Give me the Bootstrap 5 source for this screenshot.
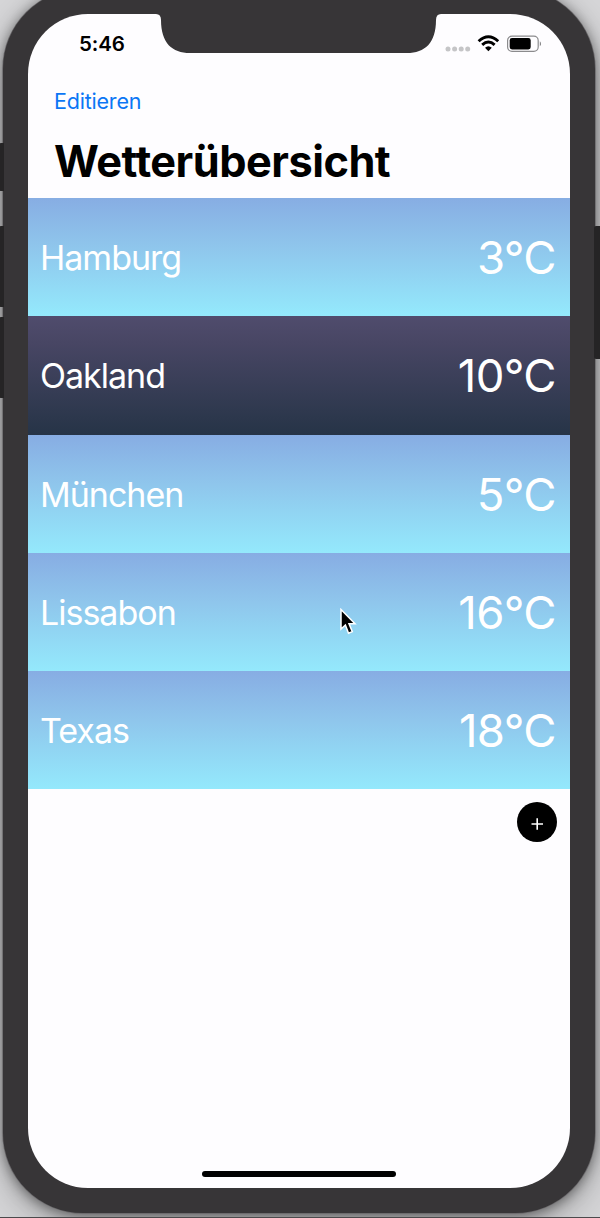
<!DOCTYPE html>
<html lang="de">
<head>
<meta charset="utf-8">
<meta name="viewport" content="width=device-width, initial-scale=1">
<title>Wetterübersicht</title>
<link href="https://cdn.jsdelivr.net/npm/bootstrap@5.3.0/dist/css/bootstrap.min.css" rel="stylesheet">
<style>
  body { height: 1218px; background: #d6d6d8; font-family: Inter, "Liberation Sans", sans-serif; }
  .stage { width: 600px; height: 1218px; border-bottom: 1px solid #4b4a4c; }
  .phone { width: 592.5px; height: 1224px; margin: -11px 0 0 2.5px; padding: 25px 25px 26px; background: #373537; border-radius: 80px;
    box-shadow: 0 0 0 .7px #69676a, 0 2px 14px rgba(0,0,0,.5), 0 12px 36px rgba(0,0,0,.25); }
  .screen { height: 1173.5px; background: #fefdff; border-radius: 60px; }
  .side-key { width: 5px; background: #252425; border-radius: 2px 0 0 2px; }
  .key-mute { left: -1px; top: 143px; height: 48px; }
  .key-up { left: -1px; top: 226px; height: 81px; }
  .key-down { left: -1px; top: 317px; height: 81px; }
  .key-power { left: 594px; top: 226px; width: 7px; height: 133px; }
  .notch { left: 128.5px; top: -1px; }
  .status { height: 60px; padding: 0 29px 0 51.5px; }
  .clock { font-size: 20.5px; font-weight: 600; letter-spacing: -.1px; }
  .edit { font-size: 21.5px; line-height: 26px; color: #0b76f5; letter-spacing: -.2px; }
  .headline { font-size: 43.3px; line-height: 52px; font-weight: 700; letter-spacing: -.5px; margin-top: 21px; }
  .toolbar { height: 124px; padding: 14px 26.5px 0; }
  .city { height: 118.3px; padding: 1px 14px 0 12.5px; background: linear-gradient(#87ade3, #8fc6ec 42%, #94e9fc); }
  .city.night { background: linear-gradient(#504c6d, #484664 22%, #263447); }
  .place { font-size: 34px; font-weight: 400; letter-spacing: -1px; }
  .temp { font-size: 45.5px; font-weight: 400; letter-spacing: -.6px; padding-top: 1px; }
  .add { width: 40px; height: 40px; margin: 12.5px 13.3px 0 0; background: #000; }
  .home-bar { width: 194px; height: 6.5px; margin-bottom: 10.5px; background: #000; }
  .pointer { left: 339px; top: 608px; }
</style>
</head>
<body class="overflow-hidden">
<div class="stage position-relative overflow-hidden">
  <div class="side-key key-mute position-absolute"></div>
  <div class="side-key key-up position-absolute"></div>
  <div class="side-key key-down position-absolute"></div>
  <main class="phone">
    <div class="screen position-relative overflow-hidden d-flex flex-column">
      <svg class="notch position-absolute" width="286" height="42" viewBox="0 0 286 42"><path d="M0 0V1Q5 1 5 7C5 30 16 40 34 40H251C269 40 280 30 280 7Q280 1 285 1V0Z" fill="#373537"/></svg>
      <div class="status d-flex align-items-center justify-content-between">
        <span class="clock text-black">5:46</span>
        <svg width="98" height="20" viewBox="0 0 98 20">
          <g fill="#c5c5c7"><circle cx="5" cy="15" r="2.5"/><circle cx="11.6" cy="15" r="2.5"/><circle cx="18.2" cy="15" r="2.5"/><circle cx="24.7" cy="15" r="2.5"/></g>
          <g fill="none" stroke="#000" stroke-width="2.9"><path d="M35.6 7.2Q45.4-1.8 55.2 7.2"/><path d="M39.2 10.9Q45.4 5 51.6 10.9"/></g>
          <path d="M45.4 17.2L42 13.8Q45.4 10.8 48.8 13.8Z"/>
          <rect x="64.6" y="2.1" width="30.6" height="15.2" rx="4.4" fill="none" stroke="#8b8b8d" stroke-width="1.2"/>
          <rect x="66.7" y="4.1" width="21" height="11.3" rx="2.3"/>
          <path d="M96.8 7.2Q99.8 9.7 96.8 12.2Z" fill="#8b8b8d"/>
        </svg>
      </div>
      <header class="toolbar">
        <a href="#" class="edit d-block text-decoration-none">Editieren</a>
        <h1 class="headline mb-0 text-black">Wetterübersicht</h1>
      </header>
      <section class="text-white">
        <div class="city d-flex align-items-center justify-content-between"><span class="place">Hamburg</span><span class="temp">3°C</span></div>
        <div class="city night d-flex align-items-center justify-content-between"><span class="place">Oakland</span><span class="temp">10°C</span></div>
        <div class="city d-flex align-items-center justify-content-between"><span class="place">München</span><span class="temp">5°C</span></div>
        <div class="city d-flex align-items-center justify-content-between"><span class="place">Lissabon</span><span class="temp">16°C</span></div>
        <div class="city d-flex align-items-center justify-content-between"><span class="place">Texas</span><span class="temp">18°C</span></div>
      </section>
      <button class="add btn p-0 rounded-circle border-0 align-self-end d-flex" aria-label="Stadt hinzufügen"><svg width="40" height="40" viewBox="0 0 40 40"><path d="M14.5 22H26M20.2 16.2V27.8" stroke="#fff" stroke-width="1.6"/></svg></button>
      <div class="home-bar rounded-pill mt-auto mx-auto"></div>
    </div>
  </main>
  <div class="side-key key-power position-absolute"></div>
  <svg class="pointer position-absolute" width="20" height="29" viewBox="0 0 20 29"><path d="M2 1.5V21L6.4 17L9.5 25.2L13.3 23.6L10 15.8H16Z" stroke="#fff" stroke-width="1.5"/></svg>
</div>
<script src="https://cdn.jsdelivr.net/npm/bootstrap@5.3.0/dist/js/bootstrap.bundle.min.js"></script>
</body>
</html>
